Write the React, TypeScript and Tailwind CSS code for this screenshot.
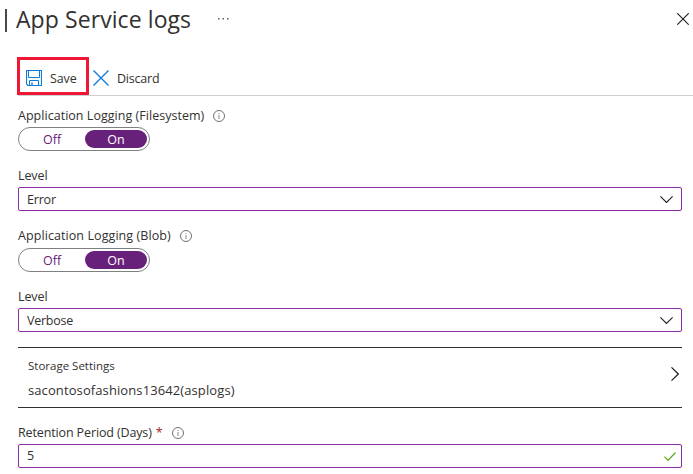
import type { ReactNode } from "react";

function InfoIcon() {
  return (
    <svg className="size-3 shrink-0" viewBox="0 0 12 12" fill="none">
      <circle cx="6" cy="6" r="5.5" stroke="#707070" strokeWidth="1" />
      <path d="M6 5v4M6 3v1" stroke="#8a8886" strokeWidth="1" />
    </svg>
  );
}

function SaveIcon() {
  return (
    <svg className="size-4 shrink-0" viewBox="0 0 16 16" fill="none" stroke="#0f7bd7">
      <path d="M.5 .5h15v15H2L.5 14z" strokeWidth="1.2" />
      <path d="M2.5 1v6.5h11V1M3.5 15v-4.5h9V15" strokeWidth="1" />
      <path d="M6 12.5v3" strokeWidth="1.4" />
    </svg>
  );
}

function DiscardIcon() {
  return (
    <svg className="size-4 shrink-0" viewBox="0 0 16 16" fill="none" stroke="#0f7bd7" strokeWidth="1.4">
      <path d="M.5 .5l15 15M15.5 .5l-15 15" />
    </svg>
  );
}

function Label({ children, tracking }: { children: ReactNode; tracking: string }) {
  return (
    <div className="flex h-5 items-center">
      <span className={tracking}>{children}</span>
    </div>
  );
}

function Toggle() {
  return (
    <div className="flex h-6 w-[132px] items-center rounded-full border border-[#808080] pr-0.5 text-[#68217a]">
      <span className="w-[66px] pt-px text-center">Off</span>
      <span className="h-[18px] w-[62px] rounded-full bg-[#68217a] pt-px text-center leading-[18px] text-white">On</span>
    </div>
  );
}

function Select({ value, tracking }: { value: string; tracking: string }) {
  return (
    <div className="flex h-6 items-center justify-between rounded-xs border border-[#8a2da5] pr-2 pl-2">
      <span className={`pt-0.5 ${tracking}`}>{value}</span>
      <svg className="h-[7px] w-[13px]" viewBox="0 0 13 7" fill="none" stroke="#201f1e" strokeWidth="1.1">
        <path d="M.4 .4l6.1 6.1L12.6 .4" />
      </svg>
    </div>
  );
}

export default function App() {
  return (
    <div className="h-[474px] w-[693px] overflow-hidden bg-white font-['Open_Sans','Noto_Sans',sans-serif] text-[12.5px] leading-5 text-[#323130]">
      <header className="flex h-[57px] items-start pr-1 pl-[5px]">
        <h1 className="flex h-[38px] items-center gap-[9px] text-[23px] leading-[38px] whitespace-nowrap">
          <span className="mt-0.5 h-[23px] w-0.5 bg-[#4a4948]" />
          <span className="w-[176px] tracking-[0.08px]">App Service logs</span>
        </h1>
        <svg className="mt-[18px] ml-[25px] h-0.5 w-3" viewBox="0 0 12 2" fill="#605e5c">
          <path d="M1 0h1.5v1.5H1zM5.5 0h1.5v1.5H5.5zM10 0h1.5v1.5H10z" />
        </svg>
        <svg className="mt-[13px] ml-auto size-3" viewBox="0 0 12 12" fill="none" stroke="#201f1e" strokeWidth="1.1">
          <path d="M.3 .3l11.4 11.4M11.7 .3L.3 11.7" />
        </svg>
      </header>

      <div className="ml-[17px] flex h-[38px] items-start">
        <button className="flex h-[38px] w-[72px] items-center gap-2 border-3 border-[#ee1736] pt-[3px] pl-1.5">
          <SaveIcon />
          <span className="pt-0.5 tracking-[-0.1px]">Save</span>
        </button>
        <button className="ml-1 flex h-[38px] items-center gap-2 pt-[3px]">
          <DiscardIcon />
          <span className="pt-0.5 tracking-[-0.2px]">Discard</span>
        </button>
      </div>

      <main className="ml-[18px]">
        <div className="h-px bg-[#cfcfcf]" />
        <div className="w-[664px]">
          <div className="flex items-center gap-[9px] pt-[10px]">
            <Label tracking="tracking-[0.03px]">Application Logging (Filesystem)</Label>
            <InfoIcon />
          </div>
          <div className="mt-px">
            <Toggle />
          </div>
          <div className="mt-[15px] mb-px">
            <Label tracking="tracking-[-0.1px]">Level</Label>
          </div>
          <Select value="Error" tracking="tracking-[-0.2px]" />

          <div className="mt-[15px] flex items-center gap-[9px]">
            <Label tracking="tracking-[0.08px]">Application Logging (Blob)</Label>
            <InfoIcon />
          </div>
          <div className="mt-0.5">
            <Toggle />
          </div>
          <div className="mt-[15px] mb-px">
            <Label tracking="tracking-[-0.1px]">Level</Label>
          </div>
          <Select value="Verbose" tracking="tracking-[-0.25px]" />

          <section className="mt-[15px] flex h-[61px] items-center justify-between border-y border-[#323130] pr-[3px] pl-2.5">
            <div className="pt-px">
              <div className="text-[11.5px] leading-6">Storage Settings</div>
              <div className="text-[13px] leading-6 tracking-[0.1px]">sacontosofashions13642(asplogs)</div>
            </div>
            <svg className="mb-2 h-[14px] w-2" viewBox="0 0 8 14" fill="none" stroke="#201f1e" strokeWidth="1.2">
              <path d="M.5 .4L7.3 7 .5 13.6" />
            </svg>
          </section>

          <div className="mt-[15px] mb-px flex items-center">
            <Label tracking="tracking-[-0.13px]">Retention Period (Days)</Label>
            <span className="mr-[9px] ml-1 text-[#a4262c]">*</span>
            <InfoIcon />
          </div>
          <div className="flex h-6 items-center justify-between rounded-xs border border-[#8a2da5] pr-[5px] pl-2">
            <span>5</span>
            <svg className="h-[9px] w-3" viewBox="0 0 12 9" fill="none" stroke="#65ac1e" strokeWidth="1.3">
              <path d="M.4 4.6l3.7 3.7L11.6 .5" />
            </svg>
          </div>
        </div>
      </main>
    </div>
  );
}
